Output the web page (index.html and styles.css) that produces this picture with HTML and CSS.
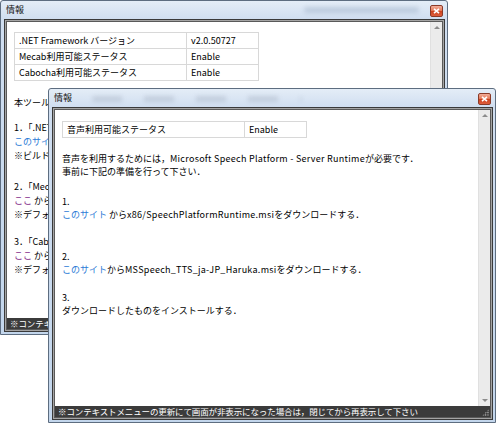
FILE: index.html
```html
<!DOCTYPE html>
<html lang="ja">
<head>
<meta charset="utf-8">
<title>情報</title>
<link rel="stylesheet" href="styles.css">
</head>
<body>
<div class="window back">
  <div class="titlebar">
    <span class="title">情報</span>
    <span class="haze haze-back"></span>
    <span class="close"><svg width="7" height="6" viewBox="0 0 7 6"><path d="M1 0.8l5 4.4M6 0.8l-5 4.4" stroke="#fff" stroke-width="1.6"/></svg></span>
  </div>
  <div class="client">
    <div class="client-inner">
      <div class="body">
        <div class="content back-content">
          <table class="info back-table">
            <tr><td class="k">.NET Framework バージョン</td><td>v2.0.50727</td></tr>
            <tr><td class="k">Mecab利用可能ステータス</td><td>Enable</td></tr>
            <tr><td class="k">Cabocha利用可能ステータス</td><td>Enable</td></tr>
          </table>
          <p class="b0">本ツール</p>
          <p class="b1">1．「.NET<br><a class="link">このサイト</a><br>※ビルド環</p>
          <p class="b2">2．「Mec<br><a class="visited">ここ</a> から<br>※デフォル</p>
          <p class="b3">3．「Cab<br><a class="visited">ここ</a> から<br>※デフォル</p>
        </div>
        <div class="scrollbar"><span class="arr up"></span><span class="arr down"></span></div>
      </div>
      <div class="status">※コンテキス<span class="grip"></span></div>
    </div>
  </div>
</div>

<div class="window front">
  <div class="titlebar">
    <span class="title">情報</span>
    <span class="haze haze-front"></span>
    <span class="close"><svg width="7" height="6" viewBox="0 0 7 6"><path d="M1 0.8l5 4.4M6 0.8l-5 4.4" stroke="#fff" stroke-width="1.6"/></svg></span>
  </div>
  <div class="client">
    <div class="client-inner">
      <div class="body">
        <div class="content front-content">
          <table class="info front-table">
            <tr><td class="k">音声利用可能ステータス</td><td>Enable</td></tr>
          </table>
          <p class="f0">音声を利用するためには，<span class="en">Microsoft Speech Platform - Server Runtime</span>が必要です．<br>事前に下記の準備を行って下さい．</p>
          <p class="f1">1.<br><a class="link">このサイト</a> から<span class="en">x86/SpeechPlatformRuntime.msi</span>をダウンロードする．</p>
          <p class="f2">2.<br><a class="link">このサイト</a>から<span class="en">MSSpeech_TTS_ja-JP_Haruka.msi</span>をダウンロードする．</p>
          <p class="f3">3.<br>ダウンロードしたものをインストールする．</p>
        </div>
        <div class="scrollbar"><span class="arr up"></span><span class="arr down"></span></div>
      </div>
      <div class="status">※コンテキストメニューの更新にて画面が非表示になった場合は，閉じてから再表示して下さい<span class="grip"></span></div>
    </div>
  </div>
</div>
</body>
</html>
```

FILE: styles.css
```css
* { box-sizing: border-box; }
html, body { margin: 0; padding: 0; }
body {
  width: 498px;
  height: 427px;
  background: #fff;
  position: relative;
  overflow: hidden;
  font-family: "Noto Sans CJK JP", "Noto Sans", sans-serif;
  font-size: 9px;
  color: #000;
}
.window {
  position: absolute;
  width: 448px;
  height: 335px;
  border: 1px solid #5d6d80;
  border-radius: 3px 3px 0 0;
  background: linear-gradient(to bottom, #e4edf7 0, #d0def0 18px, #c3d6ec 100%);
  display: flex;
  flex-direction: column;
  padding: 0 2px 2px 3px;
}
.back { left: 0; top: 0; }
.front { left: 48px; top: 88px; }

.titlebar {
  height: 18px;
  flex: none;
  display: flex;
  align-items: center;
  padding-left: 2px;
  position: relative;
}
.title { font-size: 9px; line-height: 12px; color: #111; }
.haze {
  position: absolute;
  height: 6px;
  border-radius: 3px;
  filter: blur(2px);
}
.haze-back {
  left: 300px;
  top: 6px;
  width: 115px;
  background: rgba(120, 140, 170, 0.28);
}
.haze-front {
  left: 40px;
  top: 7px;
  width: 210px;
  background: repeating-linear-gradient(to right, rgba(110, 120, 140, 0.2) 0 30px, transparent 30px 52px);
}
.close {
  margin-left: auto;
  margin-right: 2px;
  width: 13px;
  height: 12px;
  margin-top: 2px;
  border: 1px solid #8a3a28;
  border-radius: 2px;
  background: linear-gradient(to bottom, #f2ae9b 0, #e47a5a 45%, #cc431f 55%, #de5d3c 100%);
  display: flex;
  align-items: center;
  justify-content: center;
}
.close svg { display: block; }

.client {
  flex: 1;
  border: 1px solid #3a3a3a;
  padding: 1px;
  background: #a4a4a4;
  display: flex;
}
.client-inner {
  flex: 1;
  border: 1px solid #5a5a5a;
  background: #fff;
  display: flex;
  flex-direction: column;
  min-height: 0;
}
.body {
  flex: 1;
  display: flex;
  min-height: 0;
}
.content {
  flex: 1;
  padding: 10px 7px 0 7px;
  overflow: hidden;
  white-space: nowrap;
}
.front-content { padding-top: 11px; }
.scrollbar {
  width: 12px;
  flex: none;
  background: #ebebeb;
  border-left: 1px solid #e0e0e0;
  position: relative;
}
.arr {
  position: absolute;
  left: 3px;
  width: 0;
  height: 0;
  border-left: 3px solid transparent;
  border-right: 3px solid transparent;
}
.arr.up { top: 4px; border-bottom: 3px solid #8c8c8c; }
.arr.down { bottom: 4px; border-top: 3px solid #8c8c8c; }

.status {
  height: 11px;
  flex: none;
  background: #3b3b3b;
  color: #fff;
  font-size: 8.5px;
  line-height: 11px;
  padding-left: 3px;
  letter-spacing: -0.12px;
  white-space: nowrap;
  position: relative;
  overflow: hidden;
}
.grip {
  position: absolute;
  right: 1px;
  bottom: 1px;
  width: 7px;
  height: 7px;
  background:
    radial-gradient(circle, #c8c8c8 0.6px, transparent 0.9px) 0 0 / 2.4px 2.4px;
  clip-path: polygon(100% 0, 100% 100%, 0 100%);
}

.info {
  border-collapse: collapse;
  width: 245px;
  table-layout: fixed;
}
.info td {
  border: 1px solid #d8d8d8;
  height: 16px;
  padding: 0 4px 0 4px;
  line-height: 14px;
  white-space: nowrap;
  overflow: hidden;
}
.back-table td.k { width: 172px; }
.front-table td.k { width: 182px; }

p { margin: 0; }
.back-content p { line-height: 14px; }
.front-content p { line-height: 13px; }
.b0 { margin-top: 15px; }
.b1 { margin-top: 11px; }
.b2 { margin-top: 17px; }
.b3 { margin-top: 13px; }
.f0 { margin-top: 14px; }
.f1 { margin-top: 17px; }
.f2 { margin-top: 29px; }
.f3 { margin-top: 15px; }

.en { letter-spacing: 0.28px; }
.link { color: #2d7bd6; text-decoration: none; }
.visited { color: #86308c; text-decoration: none; }
```
